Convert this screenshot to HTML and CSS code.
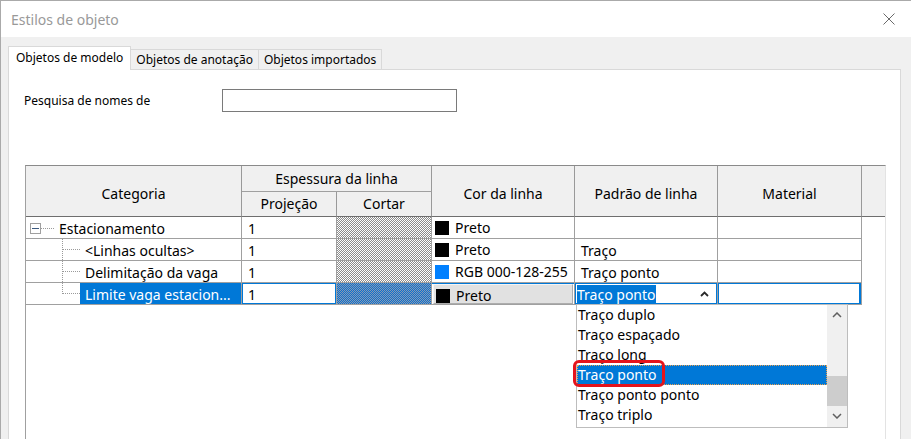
FILE: index.html
```html
<!DOCTYPE html>
<html>
<head>
    <title>Estilos de objeto</title>
    <link rel="stylesheet" href="styles.css">
</head>
<body>
    <div id="janela">
        <div class="titulo">
            <span>Estilos de objeto</span>
            <svg class="fechar" width="12" height="12" viewBox="0 0 12 12">
                <path d="M0.5 0.5 L11.5 11.5 M11.5 0.5 L0.5 11.5" stroke="#6a6a6a" stroke-width="1" fill="none"/>
            </svg>
        </div>
        <div class="corpo">
            <div class="abas">
                <div class="aba ativa">Objetos de modelo</div>
                <div class="aba">Objetos de anotação</div>
                <div class="aba">Objetos importados</div>
            </div>
            <div class="painel">
                <div class="pesquisa">
                    <label>Pesquisa de nomes de</label>
                    <input type="text">
                </div>
                <div class="grade">
                    <table>
                        <colgroup>
                            <col style="width:216px">
                            <col style="width:95px">
                            <col style="width:95px">
                            <col style="width:143px">
                            <col style="width:143px">
                            <col style="width:144px">
                            <col style="width:23px">
                        </colgroup>
                        <thead>
                            <tr>
                                <th rowspan="2">Categoria</th>
                                <th colspan="2" class="grupo">Espessura da linha</th>
                                <th rowspan="2">Cor da linha</th>
                                <th rowspan="2">Padrão de linha</th>
                                <th rowspan="2">Material</th>
                                <th rowspan="2" class="vazio"></th>
                            </tr>
                            <tr>
                                <th>Projeção</th>
                                <th>Cortar</th>
                            </tr>
                        </thead>
                        <tbody>
                            <tr>
                                <td class="cat">
                                    <div class="no">
                                        <span class="expandir"><i></i></span>
                                        <span class="traco"></span>
                                        <span class="nome">Estacionamento</span>
                                    </div>
                                </td>
                                <td class="txt">1</td>
                                <td class="hachura"></td>
                                <td class="cor"><div><span class="amostra"></span>Preto</div></td>
                                <td class="txt"></td>
                                <td class="txt"></td>
                                <td class="vazio"></td>
                            </tr>
                            <tr>
                                <td class="cat">
                                    <div class="no filho">
                                        <span class="ramo"><i></i></span>
                                        <span class="nome">&lt;Linhas ocultas&gt;</span>
                                    </div>
                                </td>
                                <td class="txt">1</td>
                                <td class="hachura"></td>
                                <td class="cor"><div><span class="amostra"></span>Preto</div></td>
                                <td class="txt">Traço</td>
                                <td class="txt"></td>
                                <td class="vazio"></td>
                            </tr>
                            <tr>
                                <td class="cat">
                                    <div class="no filho">
                                        <span class="ramo"><i></i></span>
                                        <span class="nome">Delimitação da vaga</span>
                                    </div>
                                </td>
                                <td class="txt">1</td>
                                <td class="hachura"></td>
                                <td class="cor"><div><span class="amostra azul"></span>RGB 000-128-255</div></td>
                                <td class="txt">Traço ponto</td>
                                <td class="txt"></td>
                                <td class="vazio"></td>
                            </tr>
                            <tr class="editando">
                                <td class="cat">
                                    <div class="no filho">
                                        <span class="ramo fim"><i></i></span>
                                        <span class="nome selecionado">Limite vaga estacion...</span>
                                    </div>
                                </td>
                                <td class="txt edit-num">1</td>
                                <td class="hachura"></td>
                                <td class="cor edit-cor">
                                    <div class="botao"><span class="amostra"></span>Preto</div>
                                </td>
                                <td class="edit-combo">
                                    <div class="combo-valor">
                                        <span class="marcado">Traço ponto</span>
                                        <svg class="seta" width="9" height="6" viewBox="0 0 9 6">
                                            <path d="M1 5 L4.5 1.5 L8 5" stroke="#2a2a2a" stroke-width="1.8" fill="none"/>
                                        </svg>
                                        <div class="lista">
                                            <div class="itens">
                                                <div class="item">Traço duplo</div>
                                                <div class="item">Traço espaçado</div>
                                                <div class="item">Traço long</div>
                                                <div class="item marcado-lista">Traço ponto</div>
                                                <div class="item">Traço ponto ponto</div>
                                                <div class="item">Traço triplo</div>
                                            </div>
                                            <div class="rolagem">
                                                <div class="botao-rolar">
                                                    <svg width="10" height="6" viewBox="0 0 10 6"><path d="M1 5 L5 1 L9 5" stroke="#606060" stroke-width="1.5" fill="none"/></svg>
                                                </div>
                                                <div class="trilho"><div class="polegar"></div></div>
                                                <div class="botao-rolar baixo">
                                                    <svg width="10" height="6" viewBox="0 0 10 6"><path d="M1 1 L5 5 L9 1" stroke="#606060" stroke-width="1.5" fill="none"/></svg>
                                                </div>
                                            </div>
                                            <div class="destaque"></div>
                                        </div>
                                    </div>
                                </td>
                                <td class="edit-mat"></td>
                                <td class="vazio"></td>
                            </tr>
                        </tbody>
                    </table>
                </div>
            </div>
        </div>
    </div>
</body>
</html>
```

FILE: styles.css
```css
body {
    margin: 0;
    font-family: "Noto Sans", sans-serif;
    color: #000;
}
#janela {
    width: 910px;
    height: 438px;
    border-top: 1px solid #aaaaaa;
    border-left: 1px solid #aaaaaa;
    background-color: #f0f0f0;
    overflow: hidden;
}
.titulo {
    height: 36px;
    background-color: white;
    display: flex;
    align-items: center;
    justify-content: space-between;
    padding: 0 16px 0 10px;
    font-size: 14px;
    color: #999999;
}
.corpo {
    padding: 9px 10px 0 7px;
}
.abas {
    display: flex;
    align-items: flex-end;
    height: 24px;
    margin-bottom: -1px;
    position: relative;
    z-index: 1;
}
.aba {
    box-sizing: border-box;
    height: 20px;
    margin-bottom: 1px;
    margin-left: -1px;
    padding: 0 5px;
    border: 1px solid #d9d9d9;
    border-bottom: none;
    background-color: #f0f0f0;
    font-size: 12px;
    line-height: 19px;
    white-space: nowrap;
}
.aba.ativa {
    height: 24px;
    margin: 0;
    padding: 0 7px;
    background-color: white;
    line-height: 21px;
    position: relative;
    z-index: 1;
}
.painel {
    background-color: white;
    border: 1px solid #d9d9d9;
    height: 400px;
    padding: 19px 0 0 15px;
}
.pesquisa {
    display: flex;
    align-items: center;
    font-size: 12px;
}
.pesquisa label {
    width: 198px;
}
.pesquisa input {
    box-sizing: border-box;
    width: 235px;
    height: 23px;
    margin: 0;
    padding: 0;
    border: 1px solid #7a7a7a;
}
.grade {
    margin: 53px 0 0 1px;
    width: 859px;
    height: 300px;
    border-top: 1px solid #8a8a8a;
    border-left: 1px solid #a0a0a0;
    border-right: 1px solid #e3e3e3;
    background-color: white;
}
table {
    width: 859px;
    table-layout: fixed;
    border-collapse: separate;
    border-spacing: 0;
    font-size: 14px;
}
thead tr:first-child {
    height: 26px;
}
thead tr:last-child {
    height: 25px;
}
th {
    padding: 0;
    font-weight: normal;
    background-color: #f0f0f0;
    border-right: 1px solid #999999;
    border-bottom: 1px solid #6e6e6e;
    line-height: 20px;
    white-space: nowrap;
}
th[rowspan] {
    padding-top: 5px;
}
th.grupo {
    border-bottom-color: #a0a0a0;
    padding-top: 1px;
}
th.vazio {
    border-right: none;
}
tbody tr {
    height: 22px;
}
td {
    padding: 0;
    border-right: 1px solid #a0a0a0;
    border-bottom: 1px solid #a0a0a0;
    white-space: nowrap;
    vertical-align: top;
}
td.vazio {
    border: none;
}
td.txt {
    padding: 2px 0 0 6px;
    line-height: 19px;
}
td.hachura {
    background: repeating-conic-gradient(#8c8c8c 0 25%, #ffffff 0 50%) 0 0 / 2px 2px;
}
.editando td.hachura {
    background: repeating-conic-gradient(#0a6fd1 0 25%, #8a9bb0 0 50%) 0 0 / 2px 2px;
}

/* arvore de categorias */
.no {
    display: flex;
    height: 21px;
}
.expandir {
    box-sizing: border-box;
    width: 11px;
    height: 11px;
    margin: 6px 0 0 4px;
    border: 1px solid #a0a0a0;
    display: flex;
    align-items: center;
    justify-content: center;
}
.expandir i {
    width: 7px;
    height: 1px;
    background-color: #3c5a80;
}
.traco {
    width: 13px;
    height: 0;
    margin-top: 11px;
    border-bottom: 1px dotted #9a9a9a;
}
.nome {
    flex: 1;
    padding: 2px 0 0 5px;
    line-height: 19px;
}
.filho {
    padding-left: 36px;
}
.ramo {
    width: 17px;
    border-left: 1px dotted #9a9a9a;
}
.ramo i {
    display: block;
    height: 10px;
    border-bottom: 1px dotted #9a9a9a;
}
.ramo.fim {
    height: 11px;
    align-self: flex-start;
}
.nome.selecionado {
    background-color: #0078d7;
    color: white;
}

/* cor da linha */
.cor div {
    display: flex;
    align-items: center;
    height: 21px;
    padding-left: 3px;
}
.amostra {
    width: 14px;
    height: 14px;
    margin-right: 6px;
    background-color: black;
}
.amostra.azul {
    background-color: #0080ff;
}

/* linha em edicao */
.edit-num {
    box-shadow: inset 0 0 0 1px #0078d7, inset 1px 0 #0078d7;
}
.edit-cor {
    box-shadow: inset 0 1px #0078d7;
}
.cor .botao {
    box-sizing: border-box;
    height: 20px;
    margin: 1px 1px 0 1px;
    padding: 3px 0 0 2px;
    background-color: #e1e1e1;
    border: 1px solid #adadad;
    border-top-color: #f4f4f4;
    border-left-color: #f4f4f4;
}
.edit-combo {
    box-shadow: inset 0 0 0 1px #0078d7, inset 1px 0 #0078d7;
}
.edit-mat {
    box-shadow: inset 0 0 0 1px #0078d7, inset -2px 0 #0078d7;
}
.combo-valor {
    position: relative;
    display: flex;
    align-items: center;
    height: 21px;
    padding-left: 2px;
}
.marcado {
    height: 19px;
    margin-top: 1px;
    background-color: #0078d7;
    color: white;
    line-height: 19px;
}
.seta {
    margin-left: auto;
    margin-right: 8px;
}

/* lista aberta */
.lista {
    position: absolute;
    top: 21px;
    left: 1px;
    width: 270px;
    height: 122px;
    border: 1px solid #bdbdbd;
    background-color: white;
    display: flex;
    z-index: 2;
}
.itens {
    flex: 1;
}
.item {
    height: 20px;
    padding-left: 1px;
    line-height: 20px;
}
.item.marcado-lista {
    background-color: #0078d7;
    color: white;
    outline: 1px dotted #e8a050;
    outline-offset: -1px;
}
.rolagem {
    width: 20px;
    background-color: #f0f0f0;
    display: flex;
    flex-direction: column;
}
.botao-rolar {
    height: 19px;
    display: flex;
    align-items: center;
    justify-content: center;
}
.botao-rolar.baixo {
    height: 20px;
    align-items: flex-start;
    padding-top: 6px;
    box-sizing: border-box;
}
.trilho {
    flex: 1;
}
.polegar {
    height: 30px;
    margin-top: 52px;
    background-color: #cdcdcd;
}
.destaque {
    position: absolute;
    left: -4px;
    top: 55px;
    width: 92px;
    height: 27px;
    box-sizing: border-box;
    border: 3px solid #e5141b;
    border-radius: 6px;
}
```
